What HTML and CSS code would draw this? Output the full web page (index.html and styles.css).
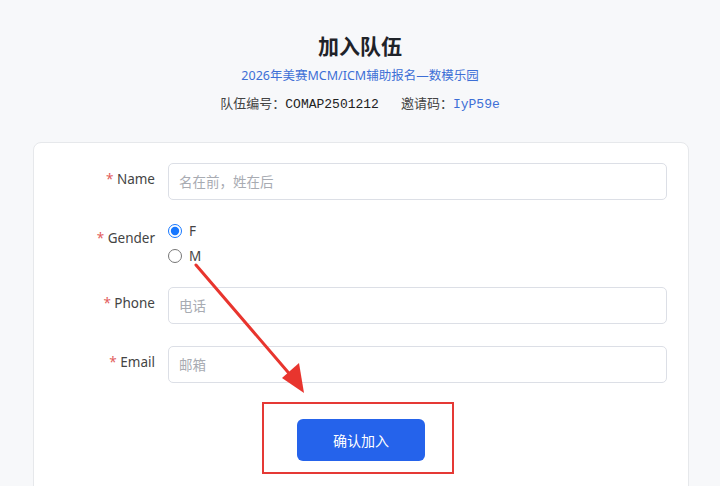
FILE: index.html
```html
<!DOCTYPE html>
<html lang="zh-CN">
<head>
    <meta charset="UTF-8">
    <meta name="viewport" content="width=device-width, initial-scale=1.0">
    <title>加入队伍</title>
    <link rel="stylesheet" href="styles.css">
</head>
<body>
    <div class="page">
        <div class="header">
            <h1>加入队伍</h1>
            <p class="subtitle">2026年美赛MCM/ICM辅助报名—数模乐园</p>
            <p class="team-info">队伍编号：<span class="code">COMAP2501212</span><span class="gap"></span>邀请码：<span class="code invite">IyP59e</span></p>
        </div>

        <div class="card">
            <form class="join-form">
                <div class="form-row">
                    <label class="form-label" for="name"><span class="req">*</span> Name</label>
                    <input class="text-input" type="text" id="name" placeholder="名在前，姓在后">
                </div>

                <div class="form-row">
                    <span class="form-label"><span class="req">*</span> Gender</span>
                    <div class="radio-group">
                        <label class="radio"><input type="radio" name="gender" value="F" checked> F</label>
                        <label class="radio"><input type="radio" name="gender" value="M"> M</label>
                    </div>
                </div>

                <div class="form-row">
                    <label class="form-label" for="phone"><span class="req">*</span> Phone</label>
                    <input class="text-input" type="text" id="phone" placeholder="电话">
                </div>

                <div class="form-row">
                    <label class="form-label" for="email"><span class="req">*</span> Email</label>
                    <input class="text-input" type="text" id="email" placeholder="邮箱">
                </div>

                <div class="actions">
                    <button type="button" class="submit-btn">确认加入</button>
                </div>
            </form>
        </div>

        <!-- annotation: arrow + highlight box -->
        <svg class="arrow" width="720" height="486" viewBox="0 0 720 486">
            <line x1="196" y1="265" x2="293" y2="378" stroke="#e8352e" stroke-width="3" stroke-linecap="round"/>
            <polygon points="304,393 282,378 299,363" fill="#e8352e"/>
        </svg>
        <div class="highlight-box"></div>
    </div>
</body>
</html>
```

FILE: styles.css
```css
body {
    margin: 0;
    background-color: #f7f8fa;
    font-family: 'Noto Sans', 'Noto Sans CJK SC', sans-serif;
    color: #333;
}
.page {
    position: relative;
    width: 720px;
    height: 486px;
    overflow: hidden;
}
.header {
    text-align: center;
    padding-top: 32px;
}
h1 {
    margin: 0;
    font-size: 21px;
    line-height: 28px;
    font-weight: bold;
    color: #1f2329;
}
.subtitle {
    margin: 7px 0 0;
    font-size: 12.5px;
    line-height: 18px;
    color: #3d6fd6;
}
.team-info {
    margin: 9px 0 0;
    font-size: 13px;
    line-height: 18px;
    color: #444;
}
.code {
    font-family: 'Liberation Mono', monospace;
    color: #222;
}
.code.invite {
    color: #3d6fd6;
}
.gap {
    display: inline-block;
    width: 22px;
}
.card {
    margin: 28px 31px 0 33px;
    background: #fff;
    border: 1px solid #e6e8eb;
    border-radius: 8px;
    padding: 20px 21px 40px;
    height: 400px;
}
.join-form {
    display: flex;
    flex-direction: column;
    gap: 22px;
}
.form-row {
    display: grid;
    grid-template-columns: 100px 1fr;
    column-gap: 13px;
    align-items: start;
}
.form-label {
    text-align: right;
    font-size: 13.5px;
    line-height: 20px;
    padding-top: 6px;
    color: #444;
}
.req {
    color: #e25c5c;
}
.text-input {
    height: 37px;
    box-sizing: border-box;
    border: 1px solid #dcdfe6;
    border-radius: 5px;
    padding: 0 10px;
    font-size: 13.5px;
    font-family: 'Noto Sans', 'Noto Sans CJK SC', sans-serif;
    color: #333;
    outline: none;
}
.text-input::placeholder {
    color: #a8abb2;
}
.radio-group {
    display: flex;
    flex-direction: column;
    gap: 7px;
}
.radio {
    display: flex;
    align-items: center;
    gap: 7px;
    height: 18px;
    font-size: 13.5px;
    color: #444;
}
.radio input {
    margin: 0;
    width: 14px;
    height: 14px;
    accent-color: #1677ff;
}
.actions {
    display: flex;
    justify-content: center;
    margin-top: 14px;
}
.submit-btn {
    width: 128px;
    height: 42px;
    background: #2563eb;
    color: #fff;
    border: none;
    border-radius: 6px;
    font-size: 14px;
    font-family: 'Noto Sans', 'Noto Sans CJK SC', sans-serif;
    cursor: pointer;
}
.arrow {
    position: absolute;
    left: 0;
    top: 0;
    pointer-events: none;
}
.highlight-box {
    position: absolute;
    left: 262px;
    top: 402px;
    width: 188px;
    height: 68px;
    border: 2px solid #e53935;
    pointer-events: none;
}
```
